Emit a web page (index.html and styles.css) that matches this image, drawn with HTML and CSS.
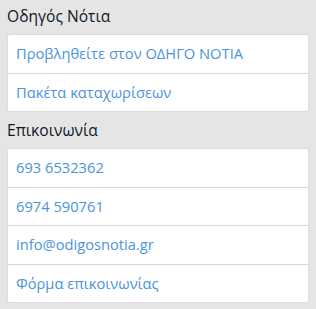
FILE: index.html
```html
<!DOCTYPE html>
<html lang="el">
<head>
<meta charset="UTF-8">
<meta name="viewport" content="width=device-width, initial-scale=1.0">
<title>Οδηγός Νότια</title>
<link rel="stylesheet" href="styles.css">
</head>
<body>

<div class="sidebar">
    <h3 class="box-title">Οδηγός Νότια</h3>
    <ul class="link-list">
        <li><a href="#">Προβληθείτε στον ΟΔΗΓΟ ΝΟΤΙΑ</a></li>
        <li><a href="#">Πακέτα καταχωρίσεων</a></li>
    </ul>

    <h3 class="box-title">Επικοινωνία</h3>
    <ul class="link-list">
        <li><a href="#">693 6532362</a></li>
        <li><a href="#">6974 590761</a></li>
        <li><a href="#">info@odigosnotia.gr</a></li>
        <li><a href="#">Φόρμα επικοινωνίας</a></li>
    </ul>
</div>

</body>
</html>
```

FILE: styles.css
```css
body {
    margin: 0;
    background-color: #e5e5e5;
    font-family: "Open Sans", "Noto Sans", sans-serif;
}

.sidebar {
    padding: 6px 7px 0;
}

.box-title {
    margin: 0 0 8px;
    font-size: 15.6px;
    font-weight: normal;
    line-height: 20px;
    color: #111827;
}

.link-list {
    list-style: none;
    margin: 0 0 8px;
    padding: 0;
    background-color: #fff;
    border: 1px solid #dcdce2;
    border-radius: 3px;
}

.link-list li {
    border-top: 1px solid #d6d6de;
}

.link-list li:first-child {
    border-top: none;
}

.link-list a {
    display: block;
    padding: 9px 8px;
    font-size: 14.7px;
    line-height: 19.5px;
    color: #4a94dc;
    text-decoration: none;
}
```
